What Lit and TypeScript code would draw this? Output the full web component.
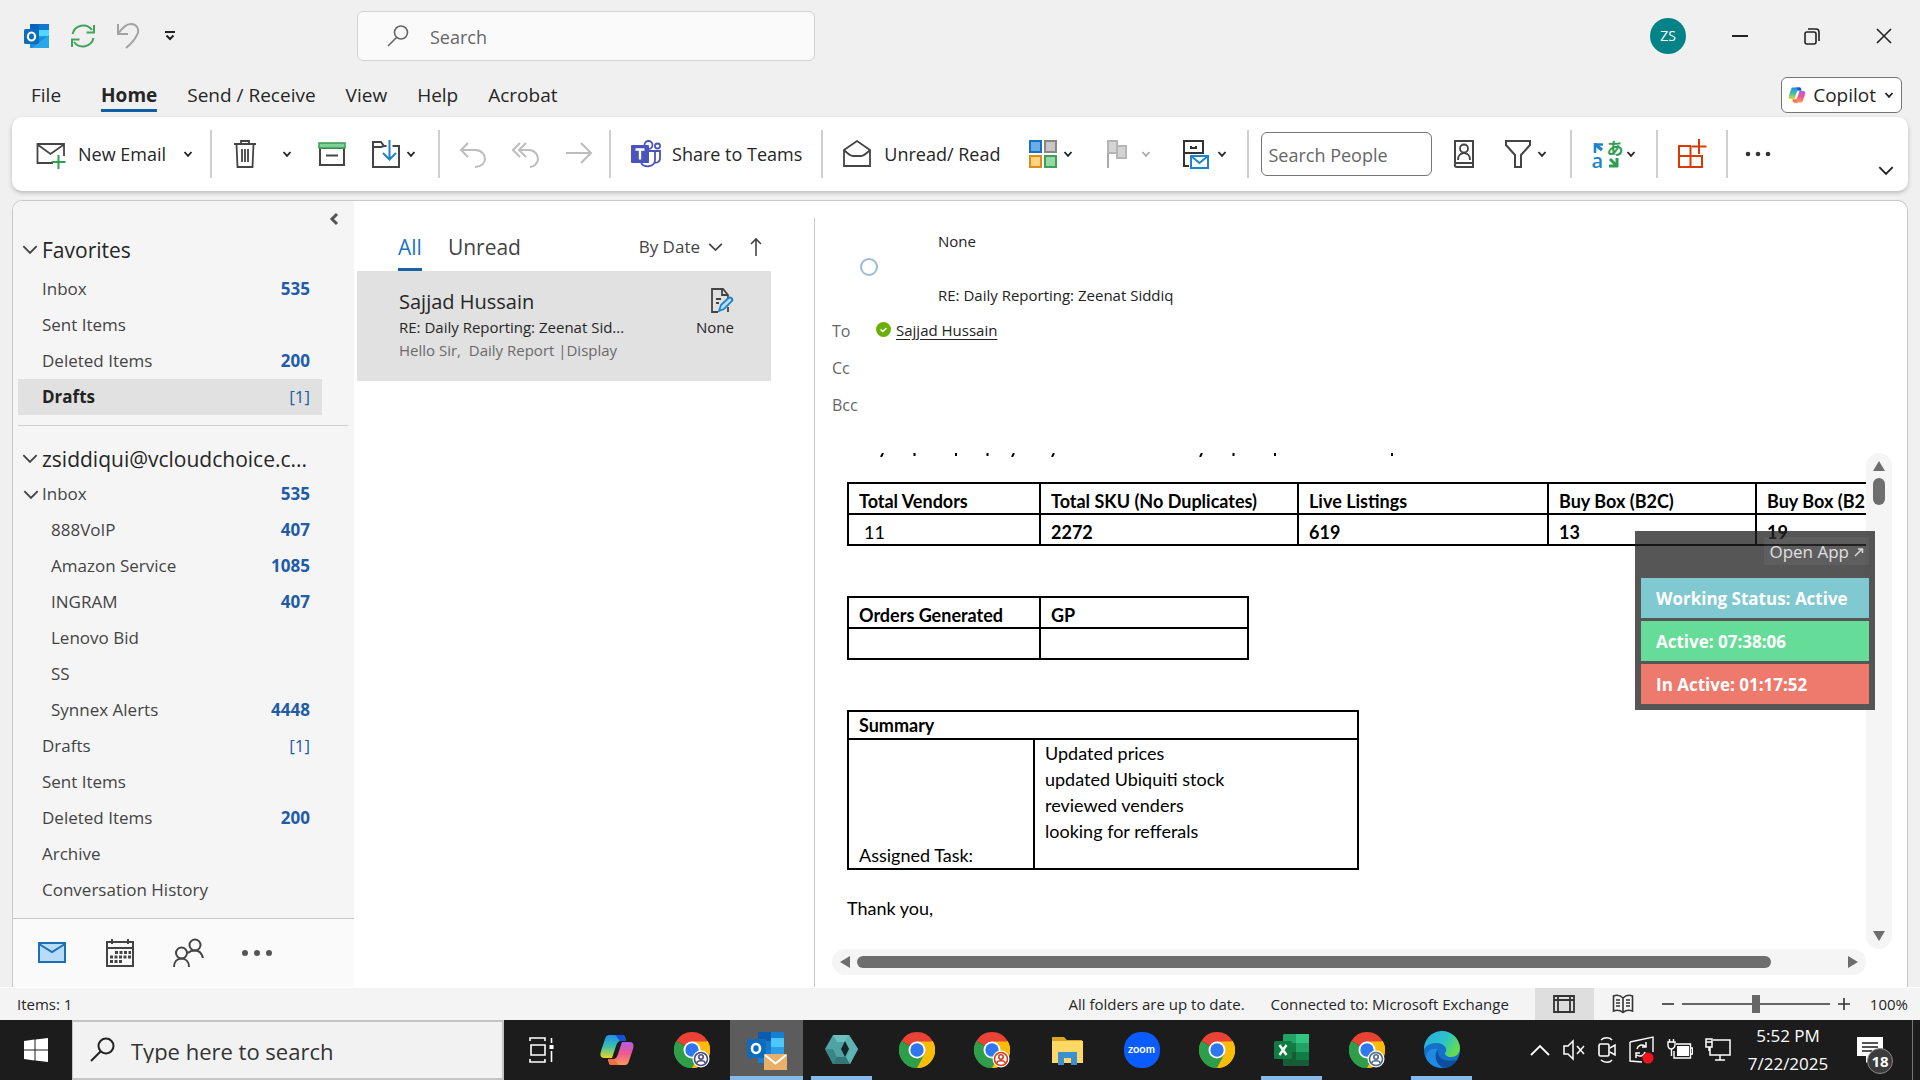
import { LitElement, html, svg, css, nothing, TemplateResult } from "lit";
import { customElement, state } from "lit/decorators.js";
import { classMap } from "lit/directives/class-map.js";

interface Folder {
  name: string;
  count?: string;
  draft?: boolean;
  depth?: number;
  open?: boolean;
  selected?: boolean;
}

const FAVORITES: Folder[] = [
  { name: "Inbox", count: "535" },
  { name: "Sent Items" },
  { name: "Deleted Items", count: "200" },
  { name: "Drafts", count: "[1]", draft: true, selected: true },
];

const ACCOUNT: Folder[] = [
  { name: "Inbox", count: "535", open: true },
  { name: "888VoIP", count: "407", depth: 1 },
  { name: "Amazon Service", count: "1085", depth: 1 },
  { name: "INGRAM", count: "407", depth: 1 },
  { name: "Lenovo Bid", depth: 1 },
  { name: "SS", depth: 1 },
  { name: "Synnex Alerts", count: "4448", depth: 1 },
  { name: "Drafts", count: "[1]", draft: true },
  { name: "Sent Items" },
  { name: "Deleted Items", count: "200" },
  { name: "Archive" },
  { name: "Conversation History" },
];

const VENDOR_COLUMNS = [
  { title: "Total Vendors", value: "11", width: 192, plain: true },
  { title: "Total SKU (No Duplicates)", value: "2272", width: 258 },
  { title: "Live Listings", value: "619", width: 250 },
  { title: "Buy Box (B2C)", value: "13", width: 208 },
  { title: "Buy Box (B2", value: "19", width: 208 },
];

const icon = (w: number, h: number, body: unknown, cls = "") =>
  html`<svg class="ico ${cls}" width=${w} height=${h} viewBox="0 0 ${w} ${h}" fill="none" aria-hidden="true">${body}</svg>`;

const chevron = (color = "#222", w = 12, h = 8) =>
  html`<svg class="ico" width=${w} height=${h} viewBox="0 0 12 8" fill="none" aria-hidden="true">
    <path d=${w > 12 ? "M1 1.500 6 6.500 11 1.500" : "M2.500 2 6 5.800 9.500 2"} stroke=${color} stroke-width=${w > 12 ? 1.4 : 1.8} />
  </svg>`;

const I = {
  outlook: icon(26, 26, svg`
    <rect x="6" y="1" width="19" height="24" rx="1.5" fill="#28a8ea"/>
    <rect x="6" y="1" width="9" height="6" fill="#0364b8"/><rect x="15" y="1" width="10" height="6" fill="#0f78d4"/>
    <rect x="15" y="7" width="10" height="6" fill="#50d9ff"/>
    <path d="M6 15 25 13V25H6Z" fill="#1490df"/><path d="M8 25 25 12V25Z" fill="#28a8ea"/>
    <rect x="0" y="6" width="15" height="15" rx="1.5" fill="#0f6cbd"/>
    <ellipse cx="7.5" cy="13.5" rx="3.6" ry="4" stroke="#fff" stroke-width="2.2"/>`),
  sync: icon(26, 26, svg`<g stroke="#3fa35b" stroke-width="2">
    <path d="M2.5 11A11 11 0 0 1 22 7M23.5 15A11 11 0 0 1 4 19"/><path d="M24 2V9.500H16.500M2 24V16.500H9.500"/></g>`),
  undo: icon(24, 28, svg`<path d="M2 2V12H12M2 12C6 6 10 2 15 2C21 2 24 8 21 13C19 17 15 22 10 26" stroke="#a3a3a3" stroke-width="2"/>`),
  custom: icon(12, 12, svg`<path d="M1 2H11" stroke="#222" stroke-width="2"/><path d="M2.500 5.500 6 9 9.500 5.500" stroke="#222" stroke-width="2"/>`),
  search: icon(24, 24, svg`<circle cx="15" cy="8.500" r="6.500" stroke="#666" stroke-width="1.600"/><path d="M10.500 13.500 2 22" stroke="#666" stroke-width="1.600"/>`),
  newMail: icon(30, 30, svg`<path d="M17 24H1.500V5H28V17M1.500 5.500 14.500 15 28 5.500" stroke="#444" stroke-width="1.800"/>
    <path d="M22.500 16V30M15.500 23H29.500" stroke="#2f9e52" stroke-width="2"/>`),
  trash: icon(24, 30, svg`<path d="M1 5H23M8 5V2H16V5M3.500 5 4.500 28H19.500L20.500 5M9 10V23M12 10V23M15 10V23" stroke="#444" stroke-width="1.800"/>`),
  archive: icon(30, 30, svg`<rect x="3" y="9" width="24" height="17" stroke="#444" stroke-width="2"/>
    <rect x="2" y="4" width="26" height="5" fill="#7fcf96" stroke="#3f9f5c" stroke-width="1.600"/><path d="M9 16.500H21" stroke="#444" stroke-width="2"/>`),
  move: icon(30, 30, svg`<path d="M2 6V28H28V7H13L10 3H2V8H10L13 7" stroke="#444" stroke-width="2"/>
    <path d="M18.500 1V20" stroke="#fff" stroke-width="6"/><path d="M18.500 1V20M12 14 18.500 20.500 25 14" stroke="#1f83cc" stroke-width="2"/>`),
  reply: icon(28, 30, svg`<path d="M9 4 2 11 9 18M2 11H16C23 11 26 16 26 20C26 24 22 28 16 28" stroke="#bdbdbd" stroke-width="2"/>`),
  replyAll: icon(28, 30, svg`<path d="M8 4 1 11 8 18M14 4 7 11 14 18M7 11H17C23 11 26 16 26 20C26 24 22 28 18 28" stroke="#bdbdbd" stroke-width="2"/>`),
  forward: icon(28, 30, svg`<path d="M1 14H26M16 4 26 14 16 24" stroke="#bdbdbd" stroke-width="2"/>`),
  teams: icon(32, 30, svg`<g stroke="#4b53bc" stroke-width="1.800"><circle cx="18.500" cy="6" r="4"/><circle cx="27.500" cy="7" r="2.500"/>
    <path d="M18 12H25V21C25 29 12 29 11 23M25 12H30V19C30 24 26 24 24 23"/></g>
    <rect x="1" y="6" width="18" height="18" rx="1" fill="#4b53bc"/><path d="M5.500 10.500H14.500M10 10.500V20.500" stroke="#fff" stroke-width="2.400"/>`),
  openMail: icon(30, 30, svg`<path d="M2 11 15 2 28 11V27H2ZM2 11C6 15 9 17 11 17H19C21 17 24 15 28 11" stroke="#444" stroke-width="1.800"/>`),
  categories: icon(30, 30, svg`<rect x="2" y="2" width="11" height="11" fill="#69afe5" stroke="#1a6fc0" stroke-width="2"/>
    <rect x="17" y="2" width="11" height="11" fill="#c8c6c4" stroke="#8a8886" stroke-width="2"/>
    <rect x="2" y="17" width="11" height="11" fill="#ffd47f" stroke="#e08a1e" stroke-width="2"/>
    <rect x="17" y="17" width="11" height="11" fill="#9ad8a1" stroke="#3f9f5c" stroke-width="2"/>`),
  flag: icon(24, 30, svg`<path d="M4 2V29" stroke="#aaa" stroke-width="2"/><path d="M4 2H13V14H4Z" fill="#d4d4d4" stroke="#b5b5b5" stroke-width="2"/><path d="M13 7H22V19H13V14Z" fill="#d4d4d4" stroke="#b5b5b5" stroke-width="2"/>`),
  rules: icon(30, 30, svg`<path d="M7 27H2V2H21V14H2M9 7V9H14V7" stroke="#333" stroke-width="2"/>
    <rect x="9" y="17" width="17" height="12" fill="#fff" stroke="#1f83cc" stroke-width="2"/><path d="M9 17 17.500 24 26 17" stroke="#1f83cc" stroke-width="2"/>`),
  book: icon(24, 30, svg`<path d="M3 24V2H21V28H5C2 28 2 24 5 24H21" stroke="#444" stroke-width="2"/><circle cx="12" cy="9.500" r="4" stroke="#444" stroke-width="1.800"/><path d="M6 21C6 16 9 14 12 14C15 14 18 16 18 21" stroke="#444" stroke-width="1.800"/>`),
  filter: icon(28, 30, svg`<path d="M2 2H26V6L17 16V28H11V16L2 6Z" stroke="#444" stroke-width="2"/>`),
  translate: html`<span class="translate" aria-hidden="true"><span class="tr-a">a</span><span class="tr-b">あ</span>
    ${icon(32, 30, svg`<path d="M4 14V4M3 5.500H12" stroke="#1f83cc" stroke-width="2.600"/><path d="M5 6 11 11" stroke="#1f83cc" stroke-width="3.500"/><path d="M26 19V28M27 27H18M19 20 25 26" stroke="#2f9e52" stroke-width="3"/>`)}</span>`,
  addins: icon(30, 30, svg`<path d="M14 7H2V28H25V17H2M13.500 7V28" stroke="#d83b01" stroke-width="2"/><path d="M22 0V15M14.500 7.500H29.500" stroke="#d83b01" stroke-width="2"/>`),
  dots: icon(28, 8, svg`<g fill="#333"><circle cx="4" cy="4" r="2.300"/><circle cx="14" cy="4" r="2.300"/><circle cx="24" cy="4" r="2.300"/></g>`),
  navMail: icon(32, 28, svg`<rect x="3" y="4" width="26" height="19" fill="#b8dcf8" stroke="#1a6fb5" stroke-width="2"/><path d="M3 5 16 13 29 5" stroke="#1a6fb5" stroke-width="2"/>`),
  calendar: icon(30, 30, svg`<path d="M2 4H28V28H2ZM2 10H28M7 1V6M23 1V6" stroke="#444" stroke-width="2"/>
    <path d="M10 14.500H26M5 19H26M5 23.500H18" stroke="#444" stroke-width="3" stroke-dasharray="3 1.500"/>`),
  people: icon(32, 30, svg`<g stroke="#444" stroke-width="2"><circle cx="9.500" cy="15" r="5.500"/><path d="M2 29C2 24 5 20.500 9.500 20.500C14 20.500 17 24 17 29"/><circle cx="23" cy="7" r="5.500"/><path d="M16 15C18 13 20 12.500 23 12.500C27.500 12.500 30 16 31 20"/></g>`),
  navDots: icon(34, 8, svg`<g fill="#555"><circle cx="4" cy="4" r="3"/><circle cx="16" cy="4" r="3"/><circle cx="28" cy="4" r="3"/></g>`),
  draft: icon(24, 26, svg`<path d="M8 25H2V2H13L18 8V11M12 2V8H18M18 20V25M6 12H11M6 16H9" stroke="#444" stroke-width="1.800"/>
    <path d="M9 24 11 18 19 10.500C22 10.500 22.500 12 22.500 13.500L14 22Z" fill="#b9def5" stroke="#1f83cc" stroke-width="1.800"/>`),
};

const user = (c: string) => svg`<circle cx="27" cy="28" r="8.500" fill="#fff"/><circle cx="27" cy="28" r="6.500" stroke=${c} stroke-width="1.600"/>
  <circle cx="27" cy="26" r="2.200" stroke=${c} stroke-width="1.600"/><path d="M23 32C23 29 31 29 31 32" stroke=${c} stroke-width="1.600"/>`;

const chrome = (badge?: string) => icon(36, 38, svg`
  <path d="M18 19 2.400 10A18 18 0 0 1 33.600 10Z" fill="#ea4335"/>
  <path d="M18 19 33.600 10A18 18 0 0 1 18 37Z" fill="#fbbc05"/>
  <path d="M18 19 18 37A18 18 0 0 1 2.400 10Z" fill="#2f9e4a"/>
  <path d="M18 10.500H33.900A18 18 0 0 1 18 37L25.400 23.200Z" fill="#fbbc05"/>
  <path d="M10.600 23.200 2.400 10A18 18 0 0 0 18 37L25.400 23.200Z" fill="#2f9e4a"/>
  <circle cx="18" cy="19" r="8.500" fill="#fff"/><circle cx="18" cy="19" r="6.700" fill="#2f77ee"/>
  ${badge ? user(badge) : nothing}`);

const copilot = (size: number, id: string) => html`<svg class="ico" width=${size} height=${size} viewBox="0 0 36 36" aria-hidden="true">
  <defs>
    <linearGradient id="${id}a" x1="0" y1="0" x2="0" y2="1"><stop offset="0" stop-color="#1d8df0"/><stop offset=".5" stop-color="#3cc0a8"/><stop offset="1" stop-color="#e8d52c"/></linearGradient>
    <linearGradient id="${id}b" x1="0" y1="0" x2="0" y2="1"><stop offset="0" stop-color="#b45be8"/><stop offset=".5" stop-color="#f0588e"/><stop offset="1" stop-color="#fb9a5c"/></linearGradient>
  </defs>
  <path d="M10 3H23C26 3 26 5 27 9H22C19 9 18 11 17 14L13 26H5C1 26 1 22 2 19L6 7C7 4 8 3 10 3Z" fill="url(#${id}a)"/>
  <path d="M16 3H23C26 3 26 5 27 9H22C20 9 19 6 16 3Z" fill="#1450d8"/>
  <path d="M26 33H13C10 33 10 31 9 27H14C17 27 18 25 19 22L23 10H31C35 10 35 14 34 17L30 29C29 32 28 33 26 33Z" fill="url(#${id}b)"/>
  <path d="M9 27H14C16 27 17 30 20 33H13C10 33 10 31 9 27Z" fill="#f2703c"/>
</svg>`;

const T = {
  taskView: icon(28, 28, svg`<path d="M2 5V2H17V5M2 23V26H17V23M3 9H17V19H3ZM23.500 2V7M23.500 15V26" stroke="#fff" stroke-width="1.600"/><rect x="21.500" y="9" width="4" height="4" fill="#fff"/>`),
  outlook: icon(42, 42, svg`
    <rect x="12" y="3" width="26" height="31" rx="1" fill="#1480d8"/><rect x="12" y="3" width="13" height="9" fill="#0a5cae"/><rect x="25" y="9" width="13" height="9" fill="#4cc8f8"/><rect x="12" y="12" width="13" height="9" fill="#1a78c8"/><rect x="25" y="18" width="13" height="7" fill="#2a9fe8"/>
    <rect x="1" y="10" width="19" height="19" rx="1" fill="#0f6cbd"/><ellipse cx="10" cy="19.500" rx="4" ry="4.500" stroke="#fff" stroke-width="2.600"/>
    <rect x="18" y="25" width="23" height="16" fill="#e9b06b"/><path d="M19 26 29.500 34.500 40 26" stroke="#fff" stroke-width="2"/>`),
  teal: icon(36, 36, svg`<path d="M9 3H25L34 17 26 32H9L1 17Z" fill="#4fa3a3"/><path d="M9 3H25L21 10H13Z" fill="#6cc0bf"/><path d="M1 17 9 32 13 25 9 17Z" fill="#3b8788"/><path d="M9 32H26L22 25H13Z" fill="#327677"/><path d="M25 3 34 17 26 32 22 25 26 17 21 10Z" fill="#5fb3b2"/><path d="M21 9 25 17 21 25 17 17Z" fill="#14262a"/>`),
  folder: icon(34, 32, svg`<path d="M2 3H14L17 6H32V12H2Z" fill="#d9a520"/><path d="M2 7H33V29H2Z" fill="#ffd866"/><path d="M8 18H27V31H21V24H14V31H8Z" fill="#3c8fd0"/>`),
  zoom: html`<span class="zoom">zoom</span>`,
  excel: icon(36, 36, svg`<rect x="9" y="2" width="26" height="32" rx="1.500" fill="#21a366"/><rect x="22" y="2" width="13" height="9" fill="#33c481"/><rect x="9" y="11" width="13" height="9" fill="#107c41"/><rect x="9" y="20" width="26" height="14" fill="#185c37"/><rect x="22" y="20" width="13" height="8" fill="#107c41"/>
    <rect x="0" y="9" width="18" height="18" rx="1.500" fill="#107c41"/><path d="M5.500 13 12.500 23M12.500 13 5.500 23" stroke="#fff" stroke-width="2.400"/>`),
  edge: html`<svg class="ico" width="38" height="38" viewBox="0 0 38 38" aria-hidden="true"><defs>
    <linearGradient id="eg" x1="0" y1="0" x2="1" y2=".5"><stop offset="0" stop-color="#2aa8e8"/><stop offset=".6" stop-color="#2cc3c8"/><stop offset="1" stop-color="#62dc50"/></linearGradient></defs>
    <circle cx="19" cy="19" r="18" fill="#1470c8"/><path d="M1 19A18 18 0 0 1 37 17C37 23 33 26 28 26C24 26 22 24 22 22C26 18 20 11 13 12C7 12 2 15 1 19Z" fill="url(#eg)"/>
    <path d="M15 18C10 22 12 33 22 36.500C14 38 6 34 3 27C3 20 8 17 15 18Z" fill="#1f8be0"/><path d="M15 19C14 26 20 32 34 29C31 34 26 37 21 37C12 34 11 23 15 19Z" fill="#0d4f9e"/></svg>`,
  up: icon(22, 14, svg`<path d="M2 12 11 3 20 12" stroke="#fff" stroke-width="1.800"/>`),
  mute: icon(22, 24, svg`<path d="M1 8H5L10 3V21L5 16H1Z M14 8 21 16M21 8 14 16" stroke="#fff" stroke-width="1.500"/>`),
  meet: icon(20, 28, svg`<rect x="2" y="8" width="10" height="12" rx="1.500" stroke="#fff" stroke-width="1.600"/><path d="M13 12 18 9V19L13 16M4 4C7 1 13 1 15 4M4 24C7 27 13 27 15 24" stroke="#fff" stroke-width="1.500"/>`),
  update: icon(26, 28, svg`<path d="M1 6 24 1V16M1 6V25L13 26" stroke="#fff" stroke-width="1.400"/><path d="M8 13A5 5 0 0 1 16 10M17 6V11H13M16 16A5 5 0 0 1 8 19M7 22V17H11" stroke="#fff" stroke-width="1.500"/><circle cx="19" cy="22" r="5.500" fill="#f5121d"/>`),
  battery: icon(26, 24, svg`<rect x="10" y="8" width="12" height="10" fill="#fff"/><path d="M9 6H23.500V20H7V13M24 10H25.500V16H24M2.500 1V4M6.500 1V4M1 4H8V7C8 10 5 11 4.500 11C3 11 1 10 1 7ZM4.500 11V18" stroke="#fff" stroke-width="1.400"/>`),
  network: icon(26, 26, svg`<path d="M8 3H25V18H5V10M15 18V23M10 23H20M1 2H7V10H1ZM1 5H7M4 10V14" stroke="#fff" stroke-width="1.500"/>`),
};

const TASKS: { label: string; art: TemplateResult; active?: boolean; running?: boolean }[] = [
  { label: "Task View", art: T.taskView },
  { label: "Copilot", art: copilot(36, "tc") },
  { label: "Chrome, profile 1", art: chrome("#4a4a80") },
  { label: "Outlook", art: T.outlook, active: true },
  { label: "Tracker", art: T.teal, running: true },
  { label: "Chrome", art: chrome() },
  { label: "Chrome, profile 2", art: chrome("#d0401f") },
  { label: "File Explorer", art: T.folder },
  { label: "Zoom", art: T.zoom },
  { label: "Chrome, second window", art: chrome() },
  { label: "Excel", art: T.excel, running: true },
  { label: "Chrome, profile 3", art: chrome("#4d6a86") },
  { label: "Edge", art: T.edge, running: true },
];

@customElement("app-root")
export class AppRoot extends LitElement {
  @state() private tab = "Home";

  static styles = css`
    :host { display: flex; flex-direction: column; height: 100vh; min-width: 1500px; overflow: hidden; background: #f0f0f0; color: #262626; font: 17px/24px "Open Sans", "Noto Sans", sans-serif; }
    * { box-sizing: border-box; }
    button, input { font: inherit; color: inherit; margin: 0; }
    button { background: none; border: 0; padding: 0; display: flex; align-items: center; cursor: pointer; text-align: left; white-space: nowrap; }
    a { color: inherit; }
    ul { list-style: none; margin: 0; padding: 0; }
    .ico { flex: none; display: block; }
    .grow { flex: 1; }

    .title { flex: none; display: flex; align-items: center; height: 72px; padding: 0 24px; }
    .quick { display: flex; align-items: center; gap: 20px; width: 333px; }
    .quick button:last-child { margin-left: 4px; }
    .finder { display: flex; align-items: center; gap: 20px; width: 458px; height: 50px; padding: 0 28px; background: #fafafa; border: 1px solid #d2d2d2; border-radius: 6px; }
    .finder input { flex: 1; min-width: 0; border: 0; background: none; padding: 2px 0 0; font-size: 18px; outline: 0; }
    input::placeholder { color: #666; opacity: 1; }
    .avatar { justify-content: center; width: 36px; height: 36px; border-radius: 50%; background: #038387; color: #fff; font-size: 14px; }
    .window { display: flex; gap: 55px; margin: 0 4px 0 46px; }

    .tabs { flex: none; display: flex; align-items: center; height: 45px; padding: 0 18px 0 31px; gap: 30px; font-size: 19px; }
    .tabs button { height: 30px; margin-top: 4px; border-bottom: 3px solid transparent; }
    .tabs button:first-child { margin-right: 10px; }
    .tabs .on { font-weight: 700; border-color: #0f5ea8; }
    .tabs .copilot { height: 36px; margin: 0; padding: 0 6px; gap: 7px; background: #fff; border: 1px solid #767676; border-radius: 6px; }

    .ribbon { flex: none; display: flex; height: 74px; margin: 0 12px 9px; padding: 13px 14px 13px 24px; background: #fff; border-radius: 10px; box-shadow: 0 2px 4px rgba(0,0,0,.22); font-size: 18px; }
    .group { display: flex; align-items: center; padding: 0 19px; border-right: 2px solid #cfcfcf; }
    .group.first { padding: 0 16px 0 0; }
    .group.organize { padding: 0 21px; }
    .group.respond { gap: 25px; padding-right: 16px; }
    .group.find { padding: 0 22px 0 12px; }
    .group.last { border: 0; padding-left: 16px; }
    .group button { gap: 12px; height: 40px; }
    .group .drop { margin-left: 16px; }
    .group .tight { gap: 4px; }
    .group .snug { gap: 2px; }
    .group .share { gap: 10px; }
    .s20 { margin-left: 20px; }
    .s24 { margin-left: 24px; }
    .s28 { margin-left: 28px; }
    .s30 { margin-left: 30px; }
    .people { width: 171px; height: 44px; padding: 2px 6px 0; border: 1px solid #767676; border-radius: 6px; background: #fff; }
    .expand { align-self: flex-end; height: 16px; }
    .translate { position: relative; display: block; width: 32px; height: 30px; }
    .translate svg { position: absolute; inset: 0; }
    .tr-a { position: absolute; left: 0; bottom: 0; font: 20px/16px "Open Sans", sans-serif; color: #1f83cc; font-weight: 600; }
    .tr-b { position: absolute; right: 0; top: 0; font: 700 17px/17px "Noto Sans CJK JP", sans-serif; color: #2f9e52; }

    .main { flex: 1; min-height: 0; display: flex; margin: 0 12px; background: #fff; border: 1px solid #c8c8c8; border-bottom: 0; border-radius: 10px 10px 0 0; overflow: hidden; position: relative; }
    .side { flex: none; display: flex; flex-direction: column; width: 341px; background: #f5f5f5; color: #444; }
    .side nav { flex: 1; min-height: 0; overflow: hidden; padding-left: 5px; }
    .collapse { margin: 10px 15px 0 auto; height: 16px; }
    .head { gap: 4px; width: 100%; height: 44px; padding: 1px 0 0 4px; font-size: 21px; color: #262626; }
    .rule + .head { height: 36px; }
    .folder { width: 304px; height: 36px; padding: 0 12px 0 24px; }
    .folder .name { flex: 1; }
    .folder.open { padding-left: 5px; gap: 3px; }
    .folder.deep { padding-left: 33px; }
    .folder .count { color: #1f5ca8; font-weight: 700; }
    .folder .count.draft { font-weight: 400; }
    .folder.sel { background: #e1e1e1; }
    .folder.sel .name { font-weight: 700; color: #222; }
    .rule { height: 1px; margin: 10px 6px 14px 0; background: #cfcfcf; border: 0; }
    .modules { flex: none; display: flex; align-items: center; gap: 37px; height: 69px; padding-left: 23px; background: #fafafa; border-top: 1px solid #c8c8c8; }

    .list { flex: none; width: 461px; border-right: 1px solid #c8c8c8; margin-top: 17px; padding: 0 43px 0 3px; color: #444; }
    .sort { display: flex; align-items: flex-end; height: 53px; padding: 0 8px 0 41px; gap: 26px; }
    .sort button { font-size: 21px; height: 46px; border-bottom: 3px solid transparent; }
    .sort .on { color: #1a73c7; border-color: #1a62a8; }
    .sort .by { font-size: 17px; gap: 8px; }
    .mail { display: grid; grid-template-columns: 1fr auto; column-gap: 20px; align-items: center; width: 100%; height: 110px; padding: 16px 37px 14px 42px; align-content: start; background: #e1e1e1; font-size: 15px; }
    .mail .who { font-size: 20px; line-height: 28px; padding-top: 1px; color: #262626; }
    .mail .ico { justify-self: end; align-self: start; }
    .mail .sub { color: #262626; line-height: 22px; }
    .mail .pre { color: #6a6a6a; white-space: pre; }

    .read { flex: 1; min-width: 0; display: flex; flex-direction: column; padding-left: 17px; font-size: 15px; color: #222; }
    .meta { display: grid; grid-template-columns: 28px 78px 1fr; padding-top: 28px; align-items: center; }
    .meta p { margin: 0; grid-column: 3; line-height: 24px; }
    .meta .ring { grid-column: 2 / 4; width: 18px; height: 18px; border: 2px solid #9dbbd2; border-radius: 50%; margin: 5px 0 7px; }
    .lines { margin: 0; padding-top: 6px; display: grid; grid-template-columns: 44px 1fr; }
    .lines dt { line-height: 37px; font-size: 16px; color: #666; }
    .lines dd { margin: 0; padding-bottom: 4px; display: flex; align-items: center; gap: 5px; }
    .lines dd a { text-underline-offset: 3px; }
    .sheet { flex: 1; min-height: 0; display: grid; grid-template-columns: 1fr 26px 15px; grid-template-rows: 1fr 26px 12px; padding-top: 29px; }
    .body { overflow: hidden; padding-left: 15px; font: 18px/26px Lato, sans-serif; color: #000; }
    .marks { display: block; margin-bottom: 25px; }
    table { border-collapse: collapse; table-layout: fixed; margin: 0 0 50px; }
    td, th { border: 2px solid #000; padding: 5px 10px 0; line-height: 24px; height: 31px; text-align: left; white-space: nowrap; }
    .plain { font-weight: 400; padding-left: 15px; }
    .bold { font-weight: 700; }
    .summary { margin-bottom: 25px; }
    .summary th { padding-top: 0; line-height: 26px; height: 28px; }
    .summary td { padding-top: 0; height: 130px; line-height: 26px; vertical-align: bottom; }
    .summary td.top { vertical-align: top; }
    .body p { margin: 0; }
    .vbar, .hbar { display: flex; align-items: center; justify-content: space-between; background: #f5f5f5; border-radius: 13px; }
    .vbar { flex-direction: column; padding: 7px 0; }
    .vbar div { width: 12px; height: 27px; border-radius: 6px; background: #6e6e6e; margin-top: 6px; }
    .hbar { grid-column: 1; padding: 0 7px; }
    .hbar div { flex: 12; height: 12px; border-radius: 6px; background: #6e6e6e; margin-left: 6px; }

    .widget { position: absolute; right: 32px; top: 330px; width: 240px; display: flex; flex-direction: column; gap: 3px; padding: 6px; background: rgba(30,30,30,.75); color: #fff; font-size: 17px; font-weight: 700; }
    .widget button { align-self: flex-end; height: 28px; margin-bottom: 10px; padding: 2px 5px 0; gap: 5px; background: rgba(255,255,255,.05); font-weight: 400; color: #e0e0e0; }
    .widget div { height: 40px; padding-left: 15px; line-height: 42px; }
    .w-status { background: #80c9d0; }
    .w-active { background: #65dc97; }
    .w-idle { background: #ee796d; }

    .status { flex: none; display: flex; align-items: center; height: 33px; padding: 0 12px 0 17px; background: #f4f4f4; font-size: 15px; border-top: 1px solid #fff; }
    .status .msg { margin-right: 26px; }
    .status .view { width: 59px; height: 100%; justify-content: center; }
    .status .view.on { background: #dedede; }
    .zoombar { display: flex; align-items: center; gap: 8px; margin: 0 20px 0 9px; }
    .zoombar button { height: 20px; }
    input[type=range] { appearance: none; width: 148px; height: 20px; background: linear-gradient(#666, #666) center / 100% 2px no-repeat; }
    input[type=range]::-webkit-slider-thumb { appearance: none; width: 8px; height: 18px; background: #666; border: 0; border-radius: 0; }

    .taskbar { flex: none; display: flex; height: 60px; background: #1c1c1c; color: #fff; }
    .start { width: 72px; justify-content: center; }
    .type { display: flex; align-items: center; gap: 16px; width: 432px; padding: 0 16px; background: #f2f2f2; border: 2px solid #c4c4c4; border-left-width: 1px; }
    .type input { flex: 1; min-width: 0; background: none; border: 0; padding: 2px 0 0; font-size: 22px; outline: 0; }
    .type input::placeholder { color: #333; }
    .task { width: 75px; justify-content: center; border-bottom: 4px solid transparent; padding-top: 4px; }
    .task.active { background: #5c5c5c; border-color: #85b9e8; width: 73px; margin: 0 1px; }
    .task.running { width: 61px; margin: 0 7px; border-color: #85b9e8; }
    .zoom { display: block; width: 36px; height: 36px; border-radius: 17px; background: #0b5cff; color: #fff; font: 700 11px/34px Lato, sans-serif; text-align: center; }
    .tray { display: flex; align-items: center; gap: 12px; }
    .clock { flex-direction: column; justify-content: center; font-size: 17px; line-height: 28px; width: 90px; margin: 0 24px 0 12px; }
    .note { position: relative; width: 36px; margin-right: 19px; }
    .badge { position: absolute; right: 0; bottom: 6px; width: 26px; height: 26px; border-radius: 50%; background: #3c3c3c; border: 1px solid #8a8a8a; font: 700 15px/24px "Open Sans", sans-serif; text-align: center; }
    .peek { width: 8px; border-left: 1px solid #777; }
  `;

  private folder(f: Folder) {
    return html`<li><button class=${classMap({ folder: true, sel: !!f.selected, deep: !!f.depth, open: !!f.open })}>
      ${f.open ? chevron("#444", 16, 11) : nothing}<span class="name">${f.name}</span>
      ${f.count ? html`<span class=${classMap({ count: true, draft: !!f.draft })}>${f.count}</span>` : nothing}
    </button></li>`;
  }

  private drop(label: string, color?: string, cls = "") {
    return html`<button class=${cls} aria-label=${label}>${chevron(color)}</button>`;
  }

  private renderRibbon() {
    return html`<div class="ribbon" role="toolbar" aria-label="Home commands">
      <div class="group first"><button>${I.newMail}New Email</button>${this.drop("New items", undefined, "drop")}</div>
      <div class="group organize">
        <button aria-label="Delete">${I.trash}</button>${this.drop("Delete options", undefined, "s24")}
        <button class="s24" aria-label="Archive">${I.archive}</button>
        <button class="s24 tight" aria-label="Move">${I.move}${chevron()}</button>
      </div>
      <div class="group respond">
        <button aria-label="Reply">${I.reply}</button><button aria-label="Reply all">${I.replyAll}</button><button aria-label="Forward">${I.forward}</button>
      </div>
      <div class="group"><button class="share">${I.teams}Share to Teams</button></div>
      <div class="group">
        <button>${I.openMail}Unread/ Read</button>
        <button class="s28 tight" aria-label="Categorize">${I.categories}${chevron()}</button>
        <button class="s30" aria-label="Follow up">${I.flag}${chevron("#aaa")}</button>
        <button class="s30 tight" aria-label="Rules">${I.rules}${chevron()}</button>
      </div>
      <div class="group find">
        <input class="people" aria-label="Search People" placeholder="Search People" />
        <button class="s20" aria-label="Address book">${I.book}</button>
        <button class="s28 tight" aria-label="Filter email">${I.filter}${chevron()}</button>
      </div>
      <div class="group"><button class="snug" aria-label="Translate">${I.translate}${chevron()}</button></div>
      <div class="group"><button aria-label="Get add-ins">${I.addins}</button></div>
      <div class="group last"><button aria-label="More commands">${I.dots}</button></div>
      <span class="grow"></span>
      <button class="expand" aria-label="Ribbon display options">${chevron("#222", 16, 11)}</button>
    </div>`;
  }

  private renderSide() {
    return html`<div class="side">
      <button class="collapse" aria-label="Minimize folder pane">${icon(10, 14, svg`<path d="M8 2 3 7 8 12" stroke="#555" stroke-width="3"/>`)}</button>
      <nav>
        <button class="head">${chevron("#444", 16, 11)}Favorites</button>
        <ul>${FAVORITES.map((f) => this.folder(f))}</ul>
        <hr class="rule" />
        <button class="head">${chevron("#444", 16, 11)}zsiddiqui@vcloudchoice.c...</button>
        <ul>${ACCOUNT.map((f) => this.folder(f))}</ul>
      </nav>
      <div class="modules">
        <button aria-label="Mail">${I.navMail}</button><button aria-label="Calendar">${I.calendar}</button>
        <button aria-label="People">${I.people}</button><button aria-label="More">${I.navDots}</button>
      </div>
    </div>`;
  }

  private renderList() {
    return html`<div class="list">
      <div class="sort">
        <button class="on">All</button><button>Unread</button><span class="grow"></span>
        <button class="by">By Date ${chevron("#444", 15, 10)}</button>
        <button aria-label="Sort ascending">${icon(14, 20, svg`<path d="M7 19V2M2 7 7 2 12 7" stroke="#444" stroke-width="1.600"/>`)}</button>
      </div>
      <button class="mail">
        <span class="who">Sajjad Hussain</span>${I.draft}
        <span class="sub">RE: Daily Reporting: Zeenat Sid...</span><span class="sub">None</span>
        <span class="pre">Hello Sir,  Daily Report |Display</span>
      </button>
    </div>`;
  }

  private renderBody() {
    return html`<div class="body">
      <svg class="marks" width="600" height="4" viewBox="847 453 600 4" aria-hidden="true">
        <path d="M883 453 881 457M1014 453 1012 457M1054 453 1052 457M1202 453 1200 457M914.500 453V456M956 453V456M987.500 453V456M1233.500 453V456M1275 453V456M1392 453V456" stroke="#000" stroke-width="2" />
      </svg>
      <table style="width:${VENDOR_COLUMNS.reduce((n, c) => n + c.width, 2)}px">
        <colgroup>${VENDOR_COLUMNS.map((c) => html`<col style="width:${c.width}px" />`)}</colgroup>
        <tr>${VENDOR_COLUMNS.map((c) => html`<th scope="col">${c.title}</th>`)}</tr>
        <tr>${VENDOR_COLUMNS.map((c) => html`<td class=${c.plain ? "plain" : "bold"}>${c.value}</td>`)}</tr>
      </table>
      <table style="width:401px">
        <colgroup>${[192, 208].map((w) => html`<col style="width:${w}px" />`)}</colgroup>
        <tr><th scope="col">Orders Generated</th><th scope="col">GP</th></tr>
        <tr><td></td><td></td></tr>
      </table>
      <table class="summary" style="width:511px">
        <colgroup>${[186, 324].map((w) => html`<col style="width:${w}px" />`)}</colgroup>
        <tr><th colspan="2">Summary</th></tr>
        <tr><td>Assigned Task:</td><td class="top">Updated prices<br />updated Ubiquiti stock<br />reviewed venders<br />looking for refferals</td></tr>
      </table>
      <p>Thank you,</p>
    </div>`;
  }

  private renderRead() {
    const tri = (d: string) => icon(12, 12, svg`<path d=${d} fill="#6e6e6e"/>`);
    return html`<div class="read">
      <div class="meta">
        <p>None</p><span class="ring"></span><p>RE: Daily Reporting: Zeenat Siddiq</p>
      </div>
      <dl class="lines">
        <dt>To</dt>
        <dd>${icon(15, 15, svg`<circle cx="7.500" cy="7.500" r="7.500" fill="#6bb00a"/><path d="M4.500 7.500 6.700 9.500 10.500 6" stroke="#fff" stroke-width="1.600"/>`)}<a href="#sender">Sajjad Hussain</a></dd>
        <dt>Cc</dt><dd></dd><dt>Bcc</dt><dd></dd>
      </dl>
      <div class="sheet">
        ${this.renderBody()}
        <div class="vbar">${tri("M6 1 12 11H0Z")}<div></div><span class="grow"></span>${tri("M0 1H12L6 11Z")}</div>
        <div class="hbar">${tri("M1 6 11 0V12Z")}<div></div><span class="grow"></span>${tri("M11 6 1 0V12Z")}</div>
      </div>
    </div>`;
  }

  private renderStatus() {
    return html`<footer class="status">
      <span>Items: 1</span><span class="grow"></span>
      <span class="msg">All folders are up to date.</span><span class="msg">Connected to: Microsoft Exchange</span>
      <button class="view on" aria-label="Normal view">${icon(22, 18, svg`<path d="M1 1H21V17H1ZM1 5H21M5 1V17M17 1V17" stroke="#333" stroke-width="1.800"/>`)}</button>
      <button class="view" aria-label="Reading view">${icon(22, 20, svg`<path d="M11 4C8 1 4 1 1.500 2V17C4 16 8 16 11 18.500C14 16 18 16 20.500 17V2C18 1 14 1 11 4ZM11 4V18M4 6H8M4 9H8M4 12H8M14 6H18M14 9H18M14 12H18" stroke="#333" stroke-width="1.600"/>`)}</button>
      <span class="zoombar">
        <button aria-label="Zoom out">${icon(12, 12, svg`<path d="M0 6H12" stroke="#333" stroke-width="1.600"/>`)}</button>
        <input type="range" min="0" max="100" value="50" aria-label="Zoom" />
        <button aria-label="Zoom in">${icon(12, 12, svg`<path d="M0 6H12M6 0V12" stroke="#333" stroke-width="1.600"/>`)}</button>
      </span>
      <span>100%</span>
    </footer>`;
  }

  private renderTaskbar() {
    return html`<div class="taskbar">
      <button class="start" aria-label="Start">${icon(26, 26, svg`<path d="M1 4 11.500 2.500V12.500H1ZM12.500 2.400 25 1V12.500H12.500ZM1 13.500H11.500V23.500L1 22ZM12.500 13.500H25V25L12.500 23.600Z" fill="#fff"/>`)}</button>
      <label class="type">${icon(26, 26, svg`<circle cx="17" cy="9" r="7.500" stroke="#222" stroke-width="2"/><path d="M11.500 14.500 2 24" stroke="#222" stroke-width="2"/>`)}<input aria-label="Type here to search" placeholder="Type here to search" /></label>
      ${TASKS.map((t) => html`<button class=${classMap({ task: true, active: !!t.active, running: !!t.running })} aria-label=${t.label}>${t.art}</button>`)}
      <span class="grow"></span>
      <div class="tray">
        ${[["Hidden icons", T.up], ["Volume", T.mute], ["Meet now", T.meet], ["Update", T.update], ["Battery", T.battery], ["Network", T.network]].map(
          ([label, art]) => html`<button aria-label=${label}>${art}</button>`)}
      </div>
      <button class="clock"><span>5:52 PM</span><span>7/22/2025</span></button>
      <button class="note" aria-label="Notifications">${icon(26, 28, svg`<path d="M0 1H26V20H16L9 27V20H0Z" fill="#fff"/><path d="M5 7H21M5 11H21M5 15H15" stroke="#1c1c1c" stroke-width="1.500"/>`)}<span class="badge">18</span></button>
      <span class="peek"></span>
    </div>`;
  }

  render() {
    return html`
      <header class="title">
        <div class="quick">
          <button aria-label="Outlook">${I.outlook}</button><button aria-label="Send/Receive all">${I.sync}</button>
          <button aria-label="Undo">${I.undo}</button><button aria-label="Customize toolbar">${I.custom}</button>
        </div>
        <label class="finder">${I.search}<input aria-label="Search" placeholder="Search" /></label>
        <span class="grow"></span>
        <button class="avatar" aria-label="Account">ZS</button>
        <div class="window">
          <button aria-label="Minimize">${icon(16, 16, svg`<path d="M0 8H16" stroke="#222" stroke-width="2"/>`)}</button>
          <button aria-label="Restore">${icon(18, 18, svg`<rect x="2" y="5" width="11" height="12" rx="2" stroke="#222" stroke-width="1.600"/><path d="M5 2H13C15 2 16 3 16 5V14" stroke="#222" stroke-width="1.600"/>`)}</button>
          <button aria-label="Close">${icon(16, 16, svg`<path d="M1 1 15 15M15 1 1 15" stroke="#222" stroke-width="1.600"/>`)}</button>
        </div>
      </header>
      <nav class="tabs">
        ${["File", "Home", "Send / Receive", "View", "Help", "Acrobat"].map(
          (t) => html`<button class=${t === this.tab ? "on" : ""} @click=${() => (this.tab = t)}>${t}</button>`)}
        <span class="grow"></span>
        <button class="copilot">${copilot(18, "rc")}Copilot ${chevron()}</button>
      </nav>
      ${this.renderRibbon()}
      <main class="main">
        ${this.renderSide()}${this.renderList()}${this.renderRead()}
        <aside class="widget">
          <button>Open App ${icon(10, 10, svg`<path d="M1 9 8 2M4 2H8.500V6" stroke="#d8d8d8" stroke-width="1.500"/>`)}</button>
          <div class="w-status">Working Status: Active</div>
          <div class="w-active">Active: 07:38:06</div>
          <div class="w-idle">In Active: 01:17:52</div>
        </aside>
      </main>
      ${this.renderStatus()}${this.renderTaskbar()}
    `;
  }
}
